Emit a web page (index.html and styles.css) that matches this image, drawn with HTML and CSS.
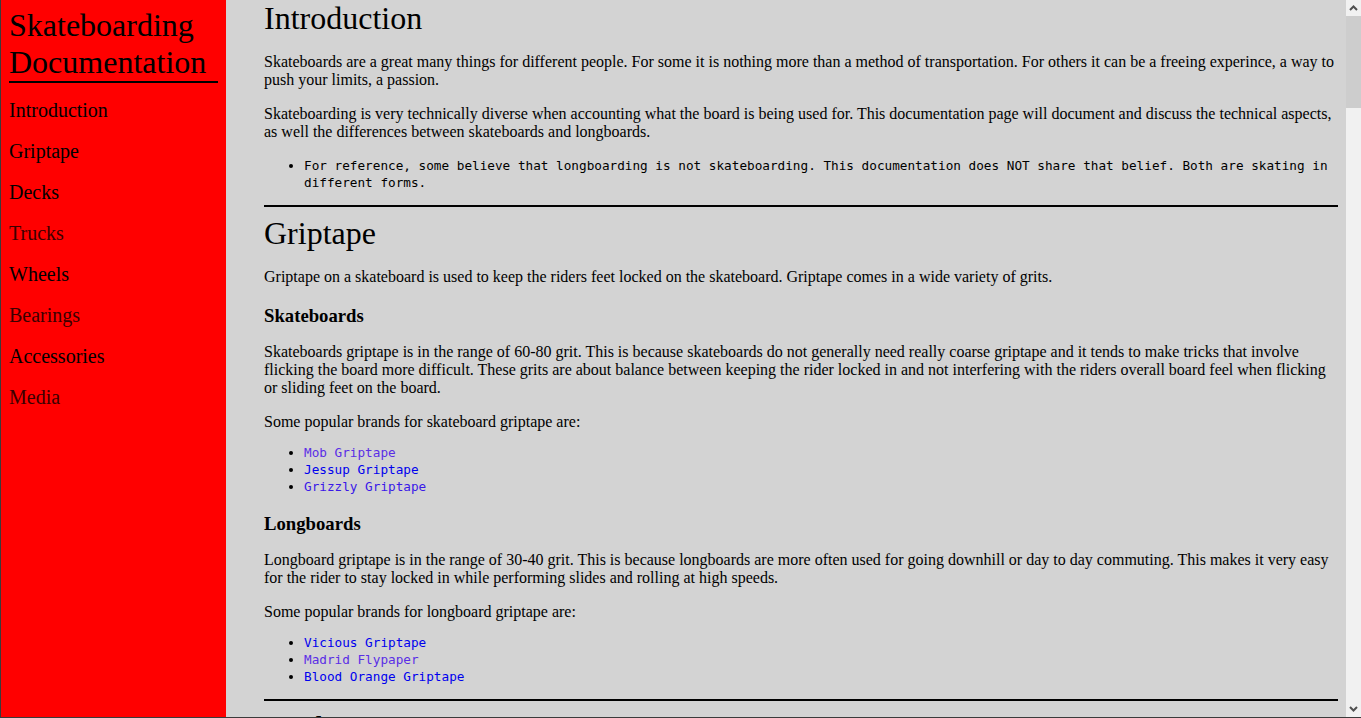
FILE: index.html
```html
<!DOCTYPE html>
<html lang="en">
<head>
<meta charset="utf-8">
<title>Skateboarding Documentation</title>
<link rel="stylesheet" href="styles.css">
</head>
<body>
<nav class="navbar" id="navbar">
  <header class="nav-title">Skateboarding Documentation</header>
  <ul class="nav-list">
    <li><a class="nav-link" href="#Introduction">Introduction</a></li>
    <li><a class="nav-link" href="#Griptape">Griptape</a></li>
    <li><a class="nav-link" href="#Decks">Decks</a></li>
    <li><a class="nav-link nav-visited" href="#Trucks">Trucks</a></li>
    <li><a class="nav-link" href="#Wheels">Wheels</a></li>
    <li><a class="nav-link nav-visited" href="#Bearings">Bearings</a></li>
    <li><a class="nav-link" href="#Accessories">Accessories</a></li>
    <li><a class="nav-link nav-visited" href="#Media">Media</a></li>
  </ul>
</nav>
<main class="main-doc" id="main-doc">
  <section class="main-section" id="Introduction">
    <h1 class="sec-title">Introduction</h1>
    <p>Skateboards are a great many things for different people. For some it is nothing more than a method of transportation. For others it can be a freeing experince, a way to push your limits, a passion.</p>
    <p>Skateboarding is very technically diverse when accounting what the board is being used for. This documentation page will document and discuss the technical aspects, as well the differences between skateboards and longboards.</p>
    <ul class="mono-list">
      <li>For reference, some believe that longboarding is not skateboarding. This documentation does NOT share that belief. Both are skating in different forms.</li>
    </ul>
  </section>
  <hr class="divider">
  <section class="main-section" id="Griptape">
    <h1 class="sec-title">Griptape</h1>
    <p>Griptape on a skateboard is used to keep the riders feet locked on the skateboard. Griptape comes in a wide variety of grits.</p>
    <h3 class="sub-title">Skateboards</h3>
    <p>Skateboards griptape is in the range of 60-80 grit. This is because skateboards do not generally need really coarse griptape and it tends to make tricks that involve flicking the board more difficult. These grits are about balance between keeping the rider locked in and not interfering with the riders overall board feel when flicking or sliding feet on the board.</p>
    <p class="lead-in">Some popular brands for skateboard griptape are:</p>
    <ul class="mono-list">
      <li><a class="visited" href="#Griptape">Mob Griptape</a></li>
      <li><a href="#Griptape">Jessup Griptape</a></li>
      <li><a class="visited-2" href="#Griptape">Grizzly Griptape</a></li>
    </ul>
    <h3 class="sub-title">Longboards</h3>
    <p>Longboard griptape is in the range of 30-40 grit. This is because longboards are more often used for going downhill or day to day commuting. This makes it very easy for the rider to stay locked in while performing slides and rolling at high speeds.</p>
    <p class="lead-in">Some popular brands for longboard griptape are:</p>
    <ul class="mono-list">
      <li><a href="#Griptape">Vicious Griptape</a></li>
      <li><a class="visited" href="#Griptape">Madrid Flypaper</a></li>
      <li><a href="#Griptape">Blood Orange Griptape</a></li>
    </ul>
  </section>
  <hr class="divider">
  <section class="main-section" id="Decks">
    <h1 class="sec-title">Decks</h1>
    <p>The deck is the board itself. Decks are usually made from layers of pressed maple wood, though bamboo, fiberglass and carbon fiber are also used. The shape of a deck changes how the board rides more than any other part.</p>
    <h3 class="sub-title">Skateboards</h3>
    <p>Skateboard decks are usually between 7.5 and 8.5 inches wide. Narrow decks are lighter and easier to flip, while wider decks give more room for the feet and more stability when landing. Most skateboard decks have a kicktail on both ends and a concave that helps the rider catch the board during tricks.</p>
    <p>Deck length and wheelbase also matter. A longer wheelbase is more stable at speed and a shorter wheelbase turns faster.</p>
    <p class="lead-in">Some popular brands for skateboard decks are:</p>
    <ul class="mono-list">
      <li><a href="#Decks">Baker Skateboards</a></li>
      <li><a href="#Decks">Girl Skateboards</a></li>
      <li><a href="#Decks">Real Skateboards</a></li>
    </ul>
    <h3 class="sub-title">Longboards</h3>
    <p>Longboard decks come in many more shapes than skateboard decks. Drop through, drop down, top mount and pintail decks are all common. Each shape changes the height of the rider and the way the board reacts when carving or sliding.</p>
    <p>Longboard decks are usually between 33 and 42 inches long. Downhill decks are stiff, while cruising and carving decks often have some flex.</p>
    <p class="lead-in">Some popular brands for longboard decks are:</p>
    <ul class="mono-list">
      <li><a href="#Decks">Landyachtz</a></li>
      <li><a href="#Decks">Loaded Boards</a></li>
      <li><a href="#Decks">Rayne Longboards</a></li>
    </ul>
  </section>
  <hr class="divider">
  <section class="main-section" id="Trucks">
    <h1 class="sec-title">Trucks</h1>
    <p>Trucks are the metal parts that connect the wheels to the deck. They are made of a baseplate, a hanger, an axle, a kingpin and bushings. Trucks control how the board turns.</p>
    <h3 class="sub-title">Skateboards</h3>
    <p>Skateboard trucks are traditional kingpin trucks. They are low and strong so they can take the impact of grinds and landings. The width of the truck hanger should roughly match the width of the deck.</p>
    <p>Softer bushings make the trucks turn more easily, while harder bushings give more stability.</p>
    <p class="lead-in">Some popular brands for skateboard trucks are:</p>
    <ul class="mono-list">
      <li><a href="#Trucks">Independent Trucks</a></li>
      <li><a href="#Trucks">Thunder Trucks</a></li>
      <li><a href="#Trucks">Venture Trucks</a></li>
    </ul>
    <h3 class="sub-title">Longboards</h3>
    <p>Longboard trucks are usually reverse kingpin trucks. They are taller, wider and turn more smoothly than skateboard trucks. Baseplate angle changes how much the truck leans and turns.</p>
    <p>Precision trucks are machined instead of cast and are used for high speed downhill riding.</p>
    <p class="lead-in">Some popular brands for longboard trucks are:</p>
    <ul class="mono-list">
      <li><a href="#Trucks">Paris Trucks</a></li>
      <li><a href="#Trucks">Caliber Trucks</a></li>
      <li><a href="#Trucks">Bear Trucks</a></li>
    </ul>
  </section>
  <hr class="divider">
  <section class="main-section" id="Wheels">
    <h1 class="sec-title">Wheels</h1>
    <p>Wheels are made of polyurethane. They are measured by their diameter in millimeters and their hardness on the durometer scale.</p>
    <h3 class="sub-title">Skateboards</h3>
    <p>Skateboard wheels are usually between 50 and 56 millimeters and have a durometer of 95a to 101a. Small hard wheels are light, slide easily on ledges and keep the board close to the ground for tricks.</p>
    <p>Softer skateboard wheels are used for rough streets and cruising.</p>
    <p class="lead-in">Some popular brands for skateboard wheels are:</p>
    <ul class="mono-list">
      <li><a href="#Wheels">Spitfire Wheels</a></li>
      <li><a href="#Wheels">Bones Wheels</a></li>
      <li><a href="#Wheels">OJ Wheels</a></li>
    </ul>
    <h3 class="sub-title">Longboards</h3>
    <p>Longboard wheels are usually between 60 and 80 millimeters and have a durometer of 75a to 86a. Large soft wheels roll over cracks and rocks, hold speed and give more grip in turns.</p>
    <p>The shape of the lip and the size of the contact patch change how much the wheel grips and how it slides.</p>
    <p class="lead-in">Some popular brands for longboard wheels are:</p>
    <ul class="mono-list">
      <li><a href="#Wheels">Orangatang Wheels</a></li>
      <li><a href="#Wheels">Abec 11</a></li>
      <li><a href="#Wheels">Seismic Wheels</a></li>
    </ul>
  </section>
  <hr class="divider">
  <section class="main-section" id="Bearings">
    <h1 class="sec-title">Bearings</h1>
    <p>Bearings sit inside the wheels and let them spin around the axle. Every wheel uses two bearings, so a board needs eight of them.</p>
    <h3 class="sub-title">Skateboards</h3>
    <p>Skateboard bearings are the standard 608 size. Bearings are often sold with an ABEC rating, but the rating says more about tolerances than about how fast the bearing spins on a board.</p>
    <p>Keeping bearings clean and lubricated is more important than the rating.</p>
    <p class="lead-in">Some popular brands for skateboard bearings are:</p>
    <ul class="mono-list">
      <li><a href="#Bearings">Bones Reds</a></li>
      <li><a href="#Bearings">Bronson Speed Co.</a></li>
      <li><a href="#Bearings">Andale Bearings</a></li>
    </ul>
    <h3 class="sub-title">Longboards</h3>
    <p>Longboards use the same 608 bearings. Many longboard bearings have built in spacers and shields to keep them running smoothly at high speed.</p>
    <p>Ceramic bearings are sometimes used because they resist heat and rust.</p>
    <p class="lead-in">Some popular brands for longboard bearings are:</p>
    <ul class="mono-list">
      <li><a href="#Bearings">Zealous Bearings</a></li>
      <li><a href="#Bearings">Orangatang Nipples</a></li>
      <li><a href="#Bearings">Shiner Bearings</a></li>
    </ul>
  </section>
  <hr class="divider">
  <section class="main-section" id="Accessories">
    <h1 class="sec-title">Accessories</h1>
    <p>Accessories are everything else that makes skating safer or easier. Helmets, pads, gloves, tools and hardware are all part of a full setup.</p>
    <h3 class="sub-title">Skateboards</h3>
    <p>Most skateboarders carry a skate tool for tightening trucks and changing wheels. Helmets and pads are common at skateparks and for learning new tricks.</p>
    <p>Wax is used on ledges and curbs to make grinds and slides easier.</p>
    <p class="lead-in">Some popular accessories for skateboards are:</p>
    <ul class="mono-list">
      <li><a href="#Accessories">Skate Tools</a></li>
      <li><a href="#Accessories">Skate Wax</a></li>
      <li><a href="#Accessories">Riser Pads</a></li>
    </ul>
    <h3 class="sub-title">Longboards</h3>
    <p>Slide gloves are used by longboarders to put a hand down on the road during slides. A full face helmet and leathers are recommended for downhill riding.</p>
    <p>Foot brakes and replacement pucks are also common.</p>
    <p class="lead-in">Some popular accessories for longboards are:</p>
    <ul class="mono-list">
      <li><a href="#Accessories">Slide Gloves</a></li>
      <li><a href="#Accessories">Full Face Helmets</a></li>
      <li><a href="#Accessories">Replacement Pucks</a></li>
    </ul>
  </section>
  <hr class="divider">
  <section class="main-section" id="Media">
    <h1 class="sec-title">Media</h1>
    <p>Skateboarding has a long history of videos, magazines and photography. Watching other riders is one of the best ways to learn.</p>
    <h3 class="sub-title">Skateboards</h3>
    <p class="lead-in">Skate videos have shaped the culture of skateboarding for decades, and many skaters are known by their video parts.</p>
    <ul class="mono-list">
      <li><a href="#Media">Thrasher Magazine</a></li>
      <li><a href="#Media">The Berrics</a></li>
      <li><a href="#Media">Transworld Skateboarding</a></li>
    </ul>
    <h3 class="sub-title">Longboards</h3>
    <p class="lead-in">Longboard media is mostly online, with downhill races, freeride sessions and dancing videos shared by riders and brands.</p>
    <ul class="mono-list">
      <li><a href="#Media">Original Skateboards</a></li>
      <li><a href="#Media">Landyachtz Videos</a></li>
      <li><a href="#Media">Concrete Wave Magazine</a></li>
    </ul>
  </section>
</main>
<div class="scrollbar" aria-hidden="true">
  <div class="sb-btn">
    <svg class="sb-arrow" width="9" height="6" viewBox="0 0 9 6"><path d="M1 5 L4.5 1.5 L8 5" fill="none" stroke="#505050" stroke-width="2"/></svg>
  </div>
  <div class="sb-track"><div class="sb-thumb"></div></div>
  <div class="sb-btn">
    <svg class="sb-arrow" width="9" height="6" viewBox="0 0 9 6"><path d="M1 1 L4.5 4.5 L8 1" fill="none" stroke="#505050" stroke-width="2"/></svg>
  </div>
</div>
</body>
</html>
```
FILE: styles.css
```css
html {
  height: 100%;
  overflow: hidden;
  box-sizing: border-box;
  border-left: 1px solid #3b3b3b;
  border-bottom: 1px solid #3b3b3b;
}

body {
  margin: 0;
  height: 100%;
  display: flex;
  font-family: "Liberation Serif", "Times New Roman", serif;
  font-size: 16px;
  color: #000;
}

.navbar {
  flex: 0 0 225px;
  background: #ff0000;
  display: flex;
  flex-direction: column;
}

.nav-title {
  font-size: 32px;
  margin: 0 8px 0 8px;
  padding-top: 7px;
  border-bottom: 2px solid #000;
}

.nav-list {
  list-style: none;
  margin: 0;
  padding: 7px 0 0;
}

.nav-link {
  display: block;
  padding: 9px 8px;
  font-size: 20px;
  color: #000;
  text-decoration: none;
}

.nav-link.nav-visited {
  color: #3a0000;
}

.main-doc {
  flex: 1;
  overflow-y: auto;
  scrollbar-width: none;
  background: #d3d3d3;
  padding: 0 8px 0 38px;
}

.sec-title {
  font-size: 32px;
  font-weight: normal;
  margin: 0 0 16px;
}

.sub-title {
  font-size: 18.72px;
  margin: 18.72px 0 16px;
}

p {
  margin: 16px 0;
}

p.lead-in {
  margin-bottom: 13px;
}

.mono-list {
  font-family: "DejaVu Sans Mono", "Liberation Mono", monospace;
  font-size: 12.7px;
  line-height: 17px;
  margin: 13px 0 14px;
  padding-left: 40px;
}

.mono-list a {
  color: #0000ee;
  text-decoration: none;
}

.mono-list a.visited {
  color: #5a2ee6;
}

.mono-list a.visited-2 {
  color: #3a18e8;
}

.divider {
  border: 0;
  height: 2px;
  background: #000;
  margin: 8px 0;
}

.scrollbar {
  flex: 0 0 15px;
  display: flex;
  flex-direction: column;
  background: #f1f1f1;
}

.sb-btn {
  flex: 0 0 16px;
  display: flex;
  align-items: center;
  justify-content: center;
}

.sb-track {
  flex: 1;
  display: flex;
  flex-direction: column;
}

.sb-thumb {
  height: 92px;
  background: #cdcdcd;
}
```
